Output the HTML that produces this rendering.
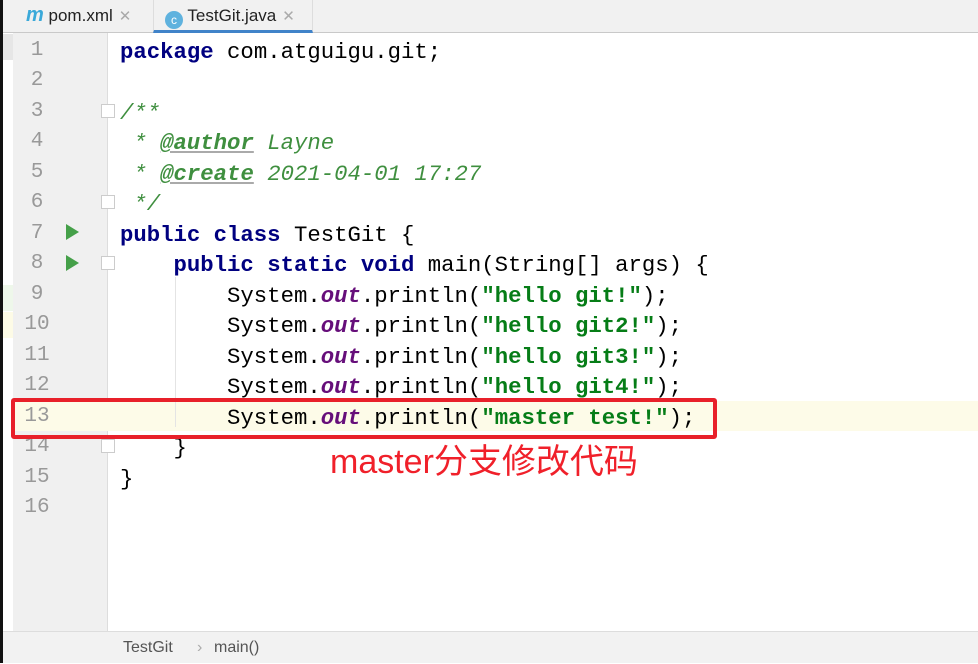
<!DOCTYPE html>
<html><head><meta charset="utf-8"><style>
*{margin:0;padding:0;box-sizing:border-box}
body{width:978px;height:663px;overflow:hidden;background:#fff;position:relative;font-family:"Liberation Sans",sans-serif}
.tabs{position:absolute;left:0;top:0;width:978px;height:33px;background:#f1f1f1;border-bottom:1px solid #c9c9c9}
.tab{position:absolute;top:0;height:32px;font-size:17px;line-height:31px;color:#222}
.x{color:#aaa;font-size:15px;margin-left:6px}
.lb{position:absolute;left:0;top:0;width:3px;height:663px;background:#111}
.gut{position:absolute;left:13px;top:33px;width:95px;height:598px;background:#f0f0f0;border-right:1px solid #ddd}
.ln{position:absolute;left:12px;width:50px;text-align:center;font-family:"Liberation Mono",monospace;font-size:21px;color:#999;height:30px;line-height:30px}
.code{position:absolute;left:120px;font-family:"Liberation Mono",monospace;font-size:22.3px;height:30px;line-height:30px;white-space:pre;color:#000}
.k{color:#000080;font-weight:bold}
.c{color:#3f8f3f;font-style:italic}
.t{color:#3f8f3f;font-weight:bold;font-style:italic;text-decoration:underline;text-decoration-color:#aaa}
.s{color:#067d17;font-weight:bold}
.f{color:#660e7a;font-style:italic;font-weight:bold}
.bot{position:absolute;left:3px;top:631px;width:975px;height:32px;background:#f2f2f2;border-top:1px solid #ddd;font-size:16px;color:#555;line-height:32px}
.run{position:absolute;left:66px;width:0;height:0;border-top:8px solid transparent;border-bottom:8px solid transparent;border-left:13px solid #45a049}
.fold{position:absolute;left:101px;width:14px;height:14px;border:1px solid #ccc;background:#fff}
</style></head><body>
<div class="tabs">
 <div class="tab" style="left:26px"><span style="color:#3ba9d9;font-weight:bold;font-style:italic;font-size:20px">m</span> pom.xml<span class="x">✕</span></div>
 <div style="position:absolute;left:153px;top:0;width:160px;height:33px;background:#f1f1f1;border-left:1px solid #ddd;border-right:1px solid #ddd;border-bottom:3px solid #4083c9"></div>
 <div class="tab" style="left:165px"><span style="display:inline-block;width:18px;height:18px;border-radius:50%;background:#5fb2de;color:#fff;font-size:12px;line-height:18px;text-align:center;vertical-align:-3px">c</span> TestGit.java<span class="x">✕</span></div>
</div>
<div class="lb"></div>
<div style="position:absolute;left:3px;top:34px;width:10px;height:26px;background:#e6e6e6"></div>
<div style="position:absolute;left:3px;top:285px;width:10px;height:26px;background:#eef7ea"></div>
<div style="position:absolute;left:3px;top:312px;width:10px;height:26px;background:#fdfbe6"></div>
<div class="gut"></div>
<div style="position:absolute;left:13px;top:401px;width:965px;height:30px;background:#fdfbe8"></div>
<div style="position:absolute;left:175px;top:277px;width:1px;height:150px;background:#e4e4e4"></div>
<div class="run" style="top:224px"></div><div class="run" style="top:255px"></div>
<div class="fold" style="top:104px"></div><div class="fold" style="top:195px"></div><div class="fold" style="top:256px"></div><div class="fold" style="top:439px"></div>
<div class="ln" style="top:36px">1</div><div class="ln" style="top:66px">2</div><div class="ln" style="top:97px">3</div><div class="ln" style="top:127px">4</div><div class="ln" style="top:158px">5</div><div class="ln" style="top:188px">6</div><div class="ln" style="top:219px">7</div><div class="ln" style="top:249px">8</div><div class="ln" style="top:280px">9</div><div class="ln" style="top:310px">10</div><div class="ln" style="top:341px">11</div><div class="ln" style="top:371px">12</div><div class="ln" style="top:402px">13</div><div class="ln" style="top:432px">14</div><div class="ln" style="top:463px">15</div><div class="ln" style="top:493px">16</div>
<div class="code" style="top:37px"><span class="k">package</span> com.atguigu.git;</div>
<div class="code" style="top:98px"><span class="c">/**</span></div>
<div class="code" style="top:128px"><span class="c"> * <span class="t">@author</span> Layne</span></div>
<div class="code" style="top:159px"><span class="c"> * <span class="t">@create</span> 2021-04-01 17:27</span></div>
<div class="code" style="top:189px"><span class="c"> */</span></div>
<div class="code" style="top:220px"><span class="k">public class</span> TestGit {</div>
<div class="code" style="top:250px">    <span class="k">public static void</span> main(String[] args) {</div>
<div class="code" style="top:281px">        System.<span class="f">out</span>.println(<span class="s">"hello git!"</span>);</div>
<div class="code" style="top:311px">        System.<span class="f">out</span>.println(<span class="s">"hello git2!"</span>);</div>
<div class="code" style="top:342px">        System.<span class="f">out</span>.println(<span class="s">"hello git3!"</span>);</div>
<div class="code" style="top:372px">        System.<span class="f">out</span>.println(<span class="s">"hello git4!"</span>);</div>
<div class="code" style="top:403px">        System.<span class="f">out</span>.println(<span class="s">"master test!"</span>);</div>
<div class="code" style="top:433px">    }</div>
<div class="code" style="top:464px">}</div>
<div style="position:absolute;left:11px;top:398px;width:706px;height:41px;border:4px solid #e8202a;border-radius:3px"></div>
<div style="position:absolute;left:330px;top:441px;font-family:'Liberation Sans','Noto Sans CJK SC',sans-serif;font-size:34px;color:#f0202a;white-space:nowrap;line-height:42px">master分支修改代码</div>
<div class="bot"><span style="position:absolute;left:120px">TestGit</span><span style="position:absolute;left:194px;color:#aaa">›</span><span style="position:absolute;left:211px">main()</span></div>
</body></html>
